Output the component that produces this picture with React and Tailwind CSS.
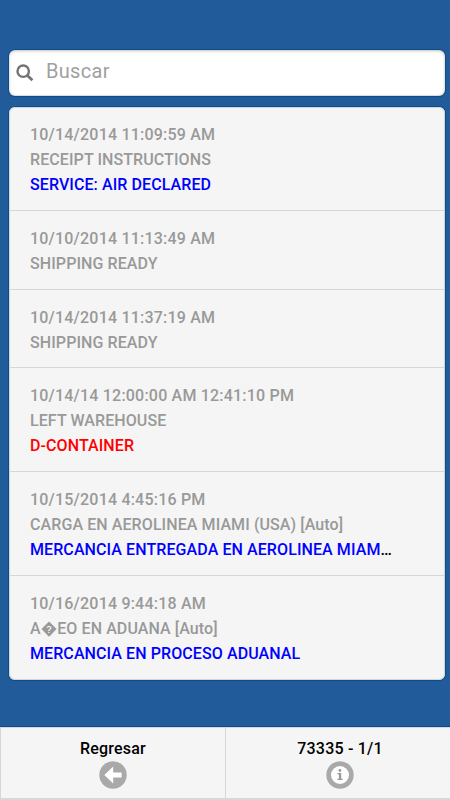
import React from 'react';

const events = [
    { id: 1, date: '10/14/2014 11:09:59 AM', status: 'RECEIPT INSTRUCTIONS', note: 'SERVICE: AIR DECLARED' },
    { id: 2, date: '10/10/2014 11:13:49 AM', status: 'SHIPPING READY' },
    { id: 3, date: '10/14/2014 11:37:19 AM', status: 'SHIPPING READY' },
    { id: 4, date: '10/14/14 12:00:00 AM 12:41:10 PM', status: 'LEFT WAREHOUSE', note: 'D-CONTAINER', alert: true },
    {
        id: 5,
        date: '10/15/2014 4:45:16 PM',
        status: 'CARGA EN AEROLINEA MIAMI (USA) [Auto]',
        note: 'MERCANCIA ENTREGADA EN AEROLINEA MIAM',
        truncated: true,
    },
    { id: 6, date: '10/16/2014 9:44:18 AM', status: 'A\uFFFDEO EN ADUANA [Auto]', note: 'MERCANCIA EN PROCESO ADUANAL' },
];

function SearchIcon() {
    return (
        <svg className="w-[18px] h-[18px] shrink-0 mt-[2px]" viewBox="0 0 18 18" fill="none" stroke="#747474">
            <circle cx="7.2" cy="7.2" r="5.7" strokeWidth="2.4" />
            <path d="M11.4 11.4L16.4 16.2" strokeWidth="2.8" />
        </svg>
    );
}

function BackIcon() {
    return (
        <svg className="w-7 h-7" viewBox="0 0 28 28">
            <circle cx="14" cy="14" r="13.7" fill="#a9a9a9" />
            <path d="M5.3 14L14.2 5.6V11.4H22.6V16.6H14.2V22.4Z" fill="#fff" />
        </svg>
    );
}

function InfoIcon() {
    return (
        <svg className="w-7 h-7" viewBox="0 0 28 28">
            <circle cx="14" cy="14" r="13.7" fill="#a9a9a9" />
            <circle cx="14" cy="14" r="9" fill="#fff" />
            <circle cx="13.9" cy="9.5" r="1.4" fill="#999" />
            <path d="M11.4 12H15.2V17.7H16.6V19H11.4V17.7H12.9V13.3H11.4Z" fill="#999" />
        </svg>
    );
}

function EventRow({ event }) {
    return (
        <li className="pl-[21px] pr-[50px] pt-[14.9px] pb-[12.95px] border-b border-[#d6d6d6] last:border-b-0 last:pb-[14px] text-[#999] whitespace-nowrap">
            <p className="tracking-[0.2px]">{event.date}</p>
            <p>{event.status}</p>
            {event.note && (
                <p className="text-black">
                    <span className={event.alert ? 'text-[#ff0000]' : 'text-[#0000ff]'}>{event.note}</span>
                    {event.truncated && '…'}
                </p>
            )}
        </li>
    );
}

export default function App() {
    return (
        <div className="flex flex-col h-[800px] w-[450px] overflow-hidden bg-[#225b99] font-['Roboto','Liberation_Sans',sans-serif]">
            <main className="flex-1 pt-[50px] pl-[9px] pr-[5px]">
                {/* Search */}
                <label className="flex items-center h-[46px] mb-[11px] pl-[7px] pb-[2px] rounded-md bg-white shadow-[0_0_0_1px_#0b4d8b,inset_0_1px_3px_#00000040,inset_0_-1px_1px_#00000020]">
                    <SearchIcon />
                    <input
                        type="text"
                        placeholder="Buscar"
                        className="flex-1 min-w-0 ml-3 -mt-[2px] bg-transparent outline-none text-[20px] tracking-[0.3px] placeholder:text-[#a0a0a0]"
                    />
                </label>

                {/* Shipment events */}
                <ul className="rounded-md bg-[#f5f5f5] shadow-[0_0_0_1px_#0b4d8b,inset_0_0_1px_1px_#d0d3d8] text-[16px] leading-[25px] tracking-[0.09px] font-medium">
                    {events.map((event) => (
                        <EventRow key={event.id} event={event} />
                    ))}
                </ul>
            </main>

            {/* Bottom bar */}
            <footer className="flex h-[73px] shrink-0 bg-[#f5f5f5] border-t border-b-2 border-[#d8d8d8] shadow-[0_-1px_0_#0b4d8b] text-[16px] leading-5 tracking-[0.2px] font-medium text-black">
                <button className="flex flex-col items-center w-[226px] pt-[11px] gap-[2px] border-x border-[#d6d6d6]">
                    <span>Regresar</span>
                    <BackIcon />
                </button>
                <button className="flex flex-col items-center flex-1 pt-[11px] gap-[2px] pl-1">
                    <span>73335 - 1/1</span>
                    <InfoIcon />
                </button>
            </footer>
        </div>
    );
}
